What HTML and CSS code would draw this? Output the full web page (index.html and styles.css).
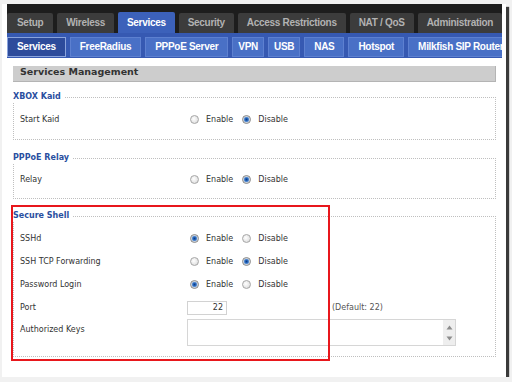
FILE: index.html
```html
<!DOCTYPE html>
<html lang="en">
<head>
    <meta charset="UTF-8">
    <title>Services Management</title>
    <link rel="stylesheet" href="styles.css">
</head>
<body>

<div class="frame">
<div class="page">
    <div class="brand"></div>

    <ul class="tabs">
        <li>Setup</li>
        <li>Wireless</li>
        <li class="on">Services</li>
        <li>Security</li>
        <li>Access Restrictions</li>
        <li>NAT / QoS</li>
        <li>Administration</li>
    </ul>

    <ul class="subtabs">
        <li class="on">Services</li>
        <li>FreeRadius</li>
        <li>PPPoE Server</li>
        <li class="short">VPN</li>
        <li class="short">USB</li>
        <li>NAS</li>
        <li>Hotspot</li>
        <li>Milkfish SIP Router</li>
    </ul>

    <div class="content">
        <h2 class="section">Services Management</h2>

        <fieldset class="fs-kaid">
            <legend>XBOX Kaid</legend>
            <div class="row">
                <span class="label">Start Kaid</span>
                <input type="radio" name="kaid"><span class="opt">Enable</span>
                <input type="radio" name="kaid" checked><span class="opt">Disable</span>
            </div>
        </fieldset>

        <fieldset class="fs-relay">
            <legend>PPPoE Relay</legend>
            <div class="row">
                <span class="label">Relay</span>
                <input type="radio" name="relay"><span class="opt">Enable</span>
                <input type="radio" name="relay" checked><span class="opt">Disable</span>
            </div>
        </fieldset>

        <div class="ssh-wrap">
            <fieldset class="fs-ssh">
                <legend>Secure Shell</legend>
                <div class="row tall">
                    <span class="label">SSHd</span>
                    <input type="radio" name="sshd" checked><span class="opt">Enable</span>
                    <input type="radio" name="sshd"><span class="opt">Disable</span>
                </div>
                <div class="row tall">
                    <span class="label">SSH TCP Forwarding</span>
                    <input type="radio" name="fwd"><span class="opt">Enable</span>
                    <input type="radio" name="fwd" checked><span class="opt">Disable</span>
                </div>
                <div class="row tall">
                    <span class="label">Password Login</span>
                    <input type="radio" name="pw" checked><span class="opt">Enable</span>
                    <input type="radio" name="pw"><span class="opt">Disable</span>
                </div>
                <div class="row tall">
                    <span class="label">Port</span>
                    <input type="text" class="num" value="22">
                    <span class="default">(Default: 22)</span>
                </div>
                <div class="row keys-row">
                    <span class="label">Authorized Keys</span>
                    <div class="keys">
                        <textarea></textarea>
                        <div class="sbar">
                            <svg width="7" height="5" viewBox="0 0 7 5"><polygon points="3.5,0.5 6.5,4.5 0.5,4.5" fill="#8c8c8c"/></svg>
                            <svg width="7" height="5" viewBox="0 0 7 5"><polygon points="0.5,0.5 6.5,0.5 3.5,4.5" fill="#8c8c8c"/></svg>
                        </div>
                    </div>
                </div>
            </fieldset>
            <div class="mark"></div>
        </div>
    </div>
</div>
</div>

</body>
</html>
```

FILE: styles.css
```css
body {
    margin: 0;
    background: #f1f1f1;
    font-family: "DejaVu Sans", Verdana, sans-serif;
    font-size: 8px;
    color: #333;
}

.frame {
    margin: 4px 0 0 2px;
    width: 495px;
    height: 373px;
    padding: 0 4px 0 5px;
    background: #fff;
    box-shadow: 3px 3px 1px #3a3a3a;
}

.page {
    height: 373px;
    overflow: hidden;
    background: #fff;
}

.brand {
    height: 9px;
    background: #1d1d1d;
}

/* top tabs */
.tabs, .subtabs {
    list-style: none;
    margin: 0;
    padding: 0;
    display: flex;
    white-space: nowrap;
    font: bold 10px "Liberation Sans", Arial, sans-serif;
    letter-spacing: -0.3px;
}
.tabs {
    gap: 4px;
    height: 20px;
    background: #1d1d1d;
}
.tabs li {
    flex: none;
    padding: 0 9px;
    line-height: 20px;
    background: #3c3c3c;
    color: #b2b2b2;
    border-radius: 2px 2px 0 0;
}
.tabs li:first-child { padding: 0 10px; }
.tabs li.on {
    background: #3c61ba;
    color: #fff;
    margin-top: -1px;
    line-height: 21px;
}

.subtabs {
    gap: 4px;
    background: #3659b2;
    padding: 4px 0 1px;
}
.subtabs li {
    flex: none;
    padding: 0 9px;
    line-height: 18px;
    border: 1px solid #5d80d0;
    background: #4970c6;
    color: #fff;
}
.subtabs li.short { padding: 0 5px; }
.subtabs li.on {
    background: #2d4b9b;
    border-color: #8aa3dc;
}

/* content */
.content {
    padding: 8px 6px 0 6px;
}

.section {
    margin: 0;
    height: 16px;
    line-height: 16px;
    padding-left: 7px;
    background: #cdcdcd;
    border-right: 1px solid #b4b4b4;
    border-bottom: 1px solid #b4b4b4;
    box-sizing: border-box;
    font: bold 9.5px "DejaVu Sans", Verdana, sans-serif;
    color: #333;
}

fieldset {
    margin: 0;
    padding: 6px 0 9px;
    border: 1px dotted #bfbfbf;
    min-width: 0;
}
legend {
    margin-left: -1px;
    padding: 0 3px 0 0;
    font: bold 8px/10px "DejaVu Sans", Verdana, sans-serif;
    color: #2a4f9f;
}
.fs-kaid { margin-top: 10px; }
.fs-relay { margin-top: 13px; padding: 5px 0 8px; }

.ssh-wrap {
    position: relative;
    margin-top: 12px;
}
.fs-ssh { padding: 6px 0 10px; }

.row {
    display: flex;
    align-items: center;
    height: 22px;
    padding-left: 6px;
}
.row.tall { height: 23px; }
.label {
    flex: none;
    width: 167px;
}

input[type=radio] {
    -webkit-appearance: none;
    appearance: none;
    flex: none;
    width: 9px;
    height: 9px;
    margin: 0 7px 0 3px;
    border: 1px solid #a6a6a6;
    border-radius: 50%;
    box-sizing: border-box;
    background: radial-gradient(circle at 40% 40%, #fff 0, #e6e6e6 60%, #cfcfcf 100%);
}
input[type=radio]:checked {
    border-color: #888;
    background: radial-gradient(circle, #0c3b85 0, #2a6cc2 1.6px, #84a9d9 2.6px, #e2e2e2 3.2px);
}
.opt { margin-right: 6px; }

.num {
    width: 40px;
    height: 14px;
    margin: 0;
    padding: 0 3px 0 0;
    box-sizing: border-box;
    border: 1px solid #d2d2d2;
    text-align: right;
    font: 8px "DejaVu Sans", Verdana, sans-serif;
    color: #333;
}
.default {
    margin-left: 105px;
    color: #555;
}

.keys-row {
    align-items: flex-start;
    height: auto;
}
.keys-row .label { padding-top: 6px; line-height: 10px; }
.keys {
    display: flex;
    width: 269px;
    height: 27px;
    border: 1px solid #d6d6d6;
    box-sizing: border-box;
}
.keys textarea {
    flex: 1;
    border: none;
    resize: none;
    margin: 0;
    padding: 0;
    outline: none;
}
.sbar {
    width: 12px;
    background: #eeeeee;
    display: flex;
    flex-direction: column;
    justify-content: space-between;
    align-items: center;
    padding: 5px 0 4px;
    box-sizing: border-box;
}

/* red highlight drawn over the Secure Shell box */
.mark {
    position: absolute;
    left: -2px;
    top: -6px;
    width: 319px;
    height: 156px;
    border: 2px solid #e8171c;
    box-sizing: border-box;
    pointer-events: none;
}
```
